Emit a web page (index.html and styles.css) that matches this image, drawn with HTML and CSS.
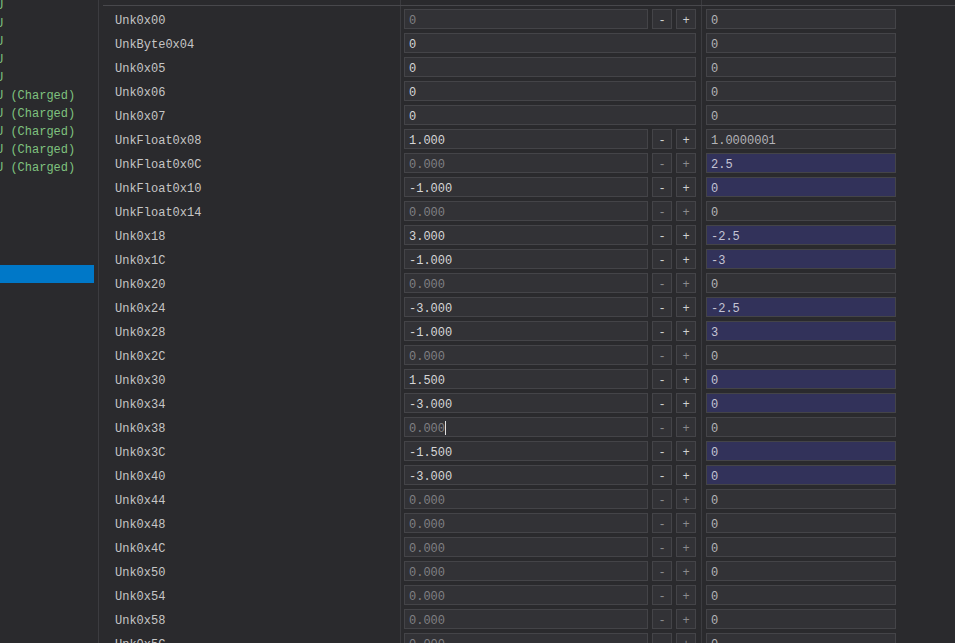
FILE: index.html
```html
<!DOCTYPE html>
<html>
<head>
<meta charset="utf-8">
<link rel="stylesheet" href="styles.css">
</head>
<body>
<div class="app">
  <div class="left">
    <div class="list">
      <div class="item">U</div>
      <div class="item">U</div>
      <div class="item">U</div>
      <div class="item">U</div>
      <div class="item">U</div>
      <div class="item">U (Charged)</div>
      <div class="item">U (Charged)</div>
      <div class="item">U (Charged)</div>
      <div class="item">U (Charged)</div>
      <div class="item">U (Charged)</div>
      <div class="item"></div>
      <div class="item"></div>
      <div class="item"></div>
      <div class="item"></div>
      <div class="item"></div>
      <div class="item selected"></div>
    </div>
  </div>
  <div class="right">
    <div class="table">
      <div class="row head"><div class="c1"></div><div class="c2"></div><div class="c3"></div></div>

      <div class="row"><div class="c1">Unk0x00</div><div class="c2"><div class="inp dim">0</div><div class="btn">-</div><div class="btn">+</div></div><div class="c3"><div class="inp3">0</div></div></div>
      <div class="row"><div class="c1">UnkByte0x04</div><div class="c2"><div class="inp full">0</div></div><div class="c3"><div class="inp3">0</div></div></div>
      <div class="row"><div class="c1">Unk0x05</div><div class="c2"><div class="inp full">0</div></div><div class="c3"><div class="inp3">0</div></div></div>
      <div class="row"><div class="c1">Unk0x06</div><div class="c2"><div class="inp full">0</div></div><div class="c3"><div class="inp3">0</div></div></div>
      <div class="row"><div class="c1">Unk0x07</div><div class="c2"><div class="inp full">0</div></div><div class="c3"><div class="inp3">0</div></div></div>
      <div class="row"><div class="c1">UnkFloat0x08</div><div class="c2"><div class="inp">1.000</div><div class="btn">-</div><div class="btn">+</div></div><div class="c3"><div class="inp3">1.0000001</div></div></div>
      <div class="row"><div class="c1">UnkFloat0x0C</div><div class="c2"><div class="inp dim">0.000</div><div class="btn dim">-</div><div class="btn dim">+</div></div><div class="c3"><div class="inp3 hl">2.5</div></div></div>
      <div class="row"><div class="c1">UnkFloat0x10</div><div class="c2"><div class="inp">-1.000</div><div class="btn">-</div><div class="btn">+</div></div><div class="c3"><div class="inp3 hl">0</div></div></div>
      <div class="row"><div class="c1">UnkFloat0x14</div><div class="c2"><div class="inp dim">0.000</div><div class="btn dim">-</div><div class="btn dim">+</div></div><div class="c3"><div class="inp3">0</div></div></div>
      <div class="row"><div class="c1">Unk0x18</div><div class="c2"><div class="inp">3.000</div><div class="btn">-</div><div class="btn">+</div></div><div class="c3"><div class="inp3 hl">-2.5</div></div></div>
      <div class="row"><div class="c1">Unk0x1C</div><div class="c2"><div class="inp">-1.000</div><div class="btn">-</div><div class="btn">+</div></div><div class="c3"><div class="inp3 hl">-3</div></div></div>
      <div class="row"><div class="c1">Unk0x20</div><div class="c2"><div class="inp dim">0.000</div><div class="btn dim">-</div><div class="btn dim">+</div></div><div class="c3"><div class="inp3">0</div></div></div>
      <div class="row"><div class="c1">Unk0x24</div><div class="c2"><div class="inp">-3.000</div><div class="btn">-</div><div class="btn">+</div></div><div class="c3"><div class="inp3 hl">-2.5</div></div></div>
      <div class="row"><div class="c1">Unk0x28</div><div class="c2"><div class="inp">-1.000</div><div class="btn">-</div><div class="btn">+</div></div><div class="c3"><div class="inp3 hl">3</div></div></div>
      <div class="row"><div class="c1">Unk0x2C</div><div class="c2"><div class="inp dim">0.000</div><div class="btn dim">-</div><div class="btn dim">+</div></div><div class="c3"><div class="inp3">0</div></div></div>
      <div class="row"><div class="c1">Unk0x30</div><div class="c2"><div class="inp">1.500</div><div class="btn">-</div><div class="btn">+</div></div><div class="c3"><div class="inp3 hl">0</div></div></div>
      <div class="row"><div class="c1">Unk0x34</div><div class="c2"><div class="inp">-3.000</div><div class="btn">-</div><div class="btn">+</div></div><div class="c3"><div class="inp3 hl">0</div></div></div>
      <div class="row"><div class="c1">Unk0x38</div><div class="c2"><div class="inp dim">0.000<span class="caret"></span></div><div class="btn dim">-</div><div class="btn dim">+</div></div><div class="c3"><div class="inp3">0</div></div></div>
      <div class="row"><div class="c1">Unk0x3C</div><div class="c2"><div class="inp">-1.500</div><div class="btn">-</div><div class="btn">+</div></div><div class="c3"><div class="inp3 hl">0</div></div></div>
      <div class="row"><div class="c1">Unk0x40</div><div class="c2"><div class="inp">-3.000</div><div class="btn">-</div><div class="btn">+</div></div><div class="c3"><div class="inp3 hl">0</div></div></div>
      <div class="row"><div class="c1">Unk0x44</div><div class="c2"><div class="inp dim">0.000</div><div class="btn dim">-</div><div class="btn dim">+</div></div><div class="c3"><div class="inp3">0</div></div></div>
      <div class="row"><div class="c1">Unk0x48</div><div class="c2"><div class="inp dim">0.000</div><div class="btn dim">-</div><div class="btn dim">+</div></div><div class="c3"><div class="inp3">0</div></div></div>
      <div class="row"><div class="c1">Unk0x4C</div><div class="c2"><div class="inp dim">0.000</div><div class="btn dim">-</div><div class="btn dim">+</div></div><div class="c3"><div class="inp3">0</div></div></div>
      <div class="row"><div class="c1">Unk0x50</div><div class="c2"><div class="inp dim">0.000</div><div class="btn dim">-</div><div class="btn dim">+</div></div><div class="c3"><div class="inp3">0</div></div></div>
      <div class="row"><div class="c1">Unk0x54</div><div class="c2"><div class="inp dim">0.000</div><div class="btn dim">-</div><div class="btn dim">+</div></div><div class="c3"><div class="inp3">0</div></div></div>
      <div class="row"><div class="c1">Unk0x58</div><div class="c2"><div class="inp dim">0.000</div><div class="btn dim">-</div><div class="btn dim">+</div></div><div class="c3"><div class="inp3">0</div></div></div>
      <div class="row"><div class="c1">Unk0x5C</div><div class="c2"><div class="inp dim">0.000</div><div class="btn dim">-</div><div class="btn dim">+</div></div><div class="c3"><div class="inp3">0</div></div></div>
    </div>
  </div>
</div>
</body>
</html>
```

FILE: styles.css
```css
html, body {
  margin: 0;
  padding: 0;
  height: 643px;
  overflow: hidden;
  background: #2a2a2d;
}
body {
  font-family: "Liberation Mono", "DejaVu Sans Mono", monospace;
  font-size: 12px;
  color: #c8c8c8;
}
.app {
  display: flex;
  height: 643px;
}
.left {
  width: 94px;
  padding-right: 4px;
  border-right: 1px solid #3c3c40;
  overflow: hidden;
  flex: none;
}
.list {
  margin-top: -3px;
}
.item {
  height: 18px;
  line-height: 18px;
  color: #7fc27f;
  white-space: nowrap;
  text-indent: -4px;
}
.item.selected {
  background: #0078c8;
  margin-top: -2px;
}
.right {
  flex: 1;
  padding-left: 4px;
  overflow: hidden;
}
.table {
  display: flex;
  flex-direction: column;
}
.row {
  display: flex;
  height: 24px;
  flex: none;
}
.row.head {
  height: 5px;
  border-bottom: 1px solid #48484c;
}
.c1 {
  width: 285px;
  padding-left: 12px;
  line-height: 24px;
  padding-top: 3px;
  height: 21px;
  overflow: hidden;
  white-space: nowrap;
  color: #c6c6c6;
  flex: none;
}
.c2 {
  width: 292px;
  padding: 0 5px 0 3px;
  border-left: 1px solid #3c3c40;
  display: flex;
  align-items: flex-start;
  gap: 4px;
  flex: none;
}
.c3 {
  flex: 1;
  padding-left: 4px;
  border-left: 1px solid #3c3c40;
}
.row.head .c1 { height: 5px; padding-top: 0; }
.inp, .inp3, .btn {
  box-sizing: border-box;
  height: 20px;
  margin-top: 3px;
  padding-top: 3px;
  line-height: 16px;
  background: #323236;
  border: 1px solid #444448;
  white-space: nowrap;
  overflow: hidden;
}
.inp {
  width: 244px;
  padding-left: 4px;
  color: #d6d6d6;
  flex: none;
}
.inp.full {
  width: 292px;
}
.inp.dim {
  color: #808084;
}
.btn {
  width: 20px;
  text-align: center;
  color: #d0d0d0;
  flex: none;
}
.btn.dim {
  color: #8a8a8e;
}
.inp3 {
  width: 190px;
  padding-left: 4px;
  color: #b4b4b8;
}
.inp3.hl {
  background: #32325a;
  color: #c4c4d4;
}
.caret {
  display: inline-block;
  width: 1px;
  height: 14px;
  background: #e0e0e0;
  vertical-align: -3px;
}
```
